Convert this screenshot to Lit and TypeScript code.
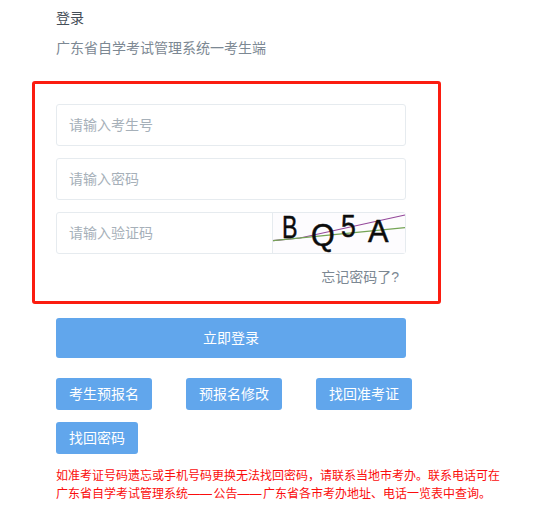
import { LitElement, html, css, svg } from "lit";
import { customElement } from "lit/decorators.js";

const captcha = svg`<svg class="cap" viewBox="0 0 132 40" width="132" height="40">
  <rect width="132" height="40" fill="#fdfcfe"/>
  <path d="M0 27.7 L27 25 L132 2" stroke="#94489a" stroke-width="1.2" fill="none"/>
  <path d="M0 27.7 L132 14.7" stroke="#74a455" stroke-width="1.2" fill="none"/>
  <text x="9" y="25" class="l" textLength="15.5" lengthAdjust="spacingAndGlyphs">B</text>
  <text x="38" y="33" class="l" textLength="23.7" lengthAdjust="spacingAndGlyphs">Q</text>
  <text x="68" y="24" class="l" textLength="14.8" lengthAdjust="spacingAndGlyphs">5</text>
  <text x="95" y="29" class="l" textLength="20.5" lengthAdjust="spacingAndGlyphs">A</text>
</svg>`;

@customElement("app-root")
export class AppRoot extends LitElement {
  static styles = css`
    :host {
      display: block;
      width: 539px;
      height: 519px;
      overflow: hidden;
      background: #fff;
      font-family: "Liberation Sans", "Noto Sans CJK SC", sans-serif;
      box-sizing: border-box;
    }
    .page { display: flex; flex-direction: column; align-items: flex-start; padding: 10px 0 0 56px; }
    .title { font-size: 14px; line-height: 16px; color: #454e58; }
    .sub { font-size: 14px; line-height: 16px; color: #7c8893; margin-top: 14px; }
    .frame {
      box-sizing: border-box;
      width: 409px;
      height: 223px;
      margin: 25px 0 0 -24px;
      padding: 20px 0 0 21px;
      border: 3px solid #fb1c10;
      border-radius: 3px;
      display: flex;
      flex-direction: column;
      gap: 12px;
    }
    .field {
      box-sizing: border-box;
      width: 350px;
      height: 42px;
      border: 1px solid #e6ebef;
      border-radius: 3px;
      padding-left: 12px;
      font-size: 14px;
      color: #a6b0b9;
      display: flex;
      align-items: center;
    }
    .field .ph { flex: 1; padding-bottom: 2px; }
    .capwrap {
      border-left: 1px solid #e6ebef;
      height: 40px;
      width: 132px;
      flex: none;
    }
    .cap { display: block; overflow: visible; }
    .l { font-family: "Liberation Sans", sans-serif; font-size: 32px; fill: #0c0c0c; stroke: #0c0c0c; stroke-width: 0.5px; }
    .forgot {
      width: 343px;
      text-align: right;
      font-size: 14px;
      line-height: 16px;
      color: #7c8893;
      margin-top: 3px;
    }
    .btn {
      background: #61a6ec;
      color: #fff;
      border-radius: 3px;
      display: flex;
      align-items: center;
      justify-content: center;
      font-size: 14px;
      padding-bottom: 2px;
      box-sizing: border-box;
    }
    .login { width: 350px; height: 40px; margin-top: 14px; }
    .row { display: flex; gap: 34px; margin-top: 20px; }
    .row .btn { width: 96px; height: 32px; }
    .row2 { margin-top: 12px; }
    .row2 .btn { width: 82px; height: 32px; }
    .note {
      width: 450px;
      margin-top: 13px;
      font-size: 12px;
      line-height: 18px;
      color: #fb0d0d;
    }
    .dash { margin-right: 1.5px; }
  `;

  render() {
    return html`<div class="page">
      <div class="title">登录</div>
      <div class="sub">广东省自学考试管理系统一考生端</div>
      <div class="frame">
        <div class="field"><span class="ph">请输入考生号</span></div>
        <div class="field"><span class="ph">请输入密码</span></div>
        <div class="field"><span class="ph">请输入验证码</span><div class="capwrap">${captcha}</div></div>
        <div class="forgot">忘记密码了?</div>
      </div>
      <div class="btn login">立即登录</div>
      <div class="row">
        <div class="btn">考生预报名</div>
        <div class="btn">预报名修改</div>
        <div class="btn">找回准考证</div>
      </div>
      <div class="row row2"><div class="btn">找回密码</div></div>
      <div class="note">如准考证号码遗忘或手机号码更换无法找回密码，请联系当地市考办。联系电话可在<br>广东省自学考试管理系统<span class="dash">——</span>公告<span class="dash">——</span>广东省各市考办地址、电话一览表中查询。</div>
    </div>`;
  }
}
